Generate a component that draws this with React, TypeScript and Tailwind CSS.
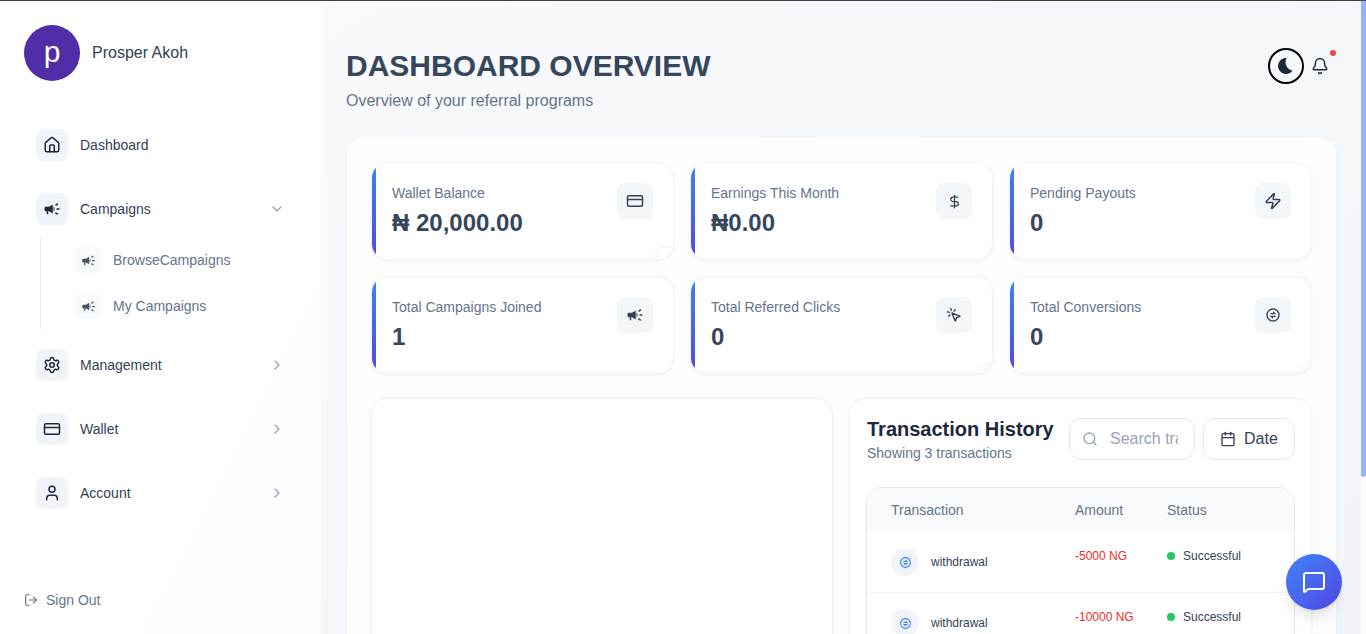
import React from 'react';
import {
  Bell,
  Calendar,
  ChevronDown,
  ChevronRight,
  CreditCard,
  DollarSign,
  House,
  LogOut,
  MessageSquare,
  MousePointerClick,
  Search,
  Settings,
  User,
  Zap,
} from 'lucide-react';
import { MdCampaign } from 'react-icons/md';
import { RiExchangeLine } from 'react-icons/ri';

const stats = [
  { label: 'Wallet Balance', value: '₦ 20,000.00', icon: <CreditCard size={18} />, mark: 'large' },
  { label: 'Earnings This Month', value: '₦0.00', icon: <DollarSign size={15} /> },
  { label: 'Pending Payouts', value: '0', icon: <Zap size={18} /> },
  { label: 'Total Campaigns Joined', value: '1', icon: <MdCampaign size={18} /> },
  { label: 'Total Referred Clicks', value: '0', icon: <MousePointerClick size={16} />, mark: 'small' },
  { label: 'Total Conversions', value: '0', icon: <RiExchangeLine size={16} />, mark: 'small' },
];

const transactions = [
  { type: 'withdrawal', amount: '-5000 NG' },
  { type: 'withdrawal', amount: '-10000 NG' },
  { type: 'withdrawal', amount: '-5000 NG' },
];

function NavItem({
  label,
  icon,
  open,
}: {
  label: string;
  icon: React.ReactNode;
  open?: boolean;
}): React.ReactElement {
  return (
    <div className="flex items-center py-4 pl-9 pr-9">
      <span className="flex h-8 w-8 items-center justify-center rounded-lg bg-[#f1f4f9] text-[#1e293b]">
        {icon}
      </span>
      <span className="ml-3 flex-1 text-sm text-[#334155]">{label}</span>
      {open === undefined ? null : open ? (
        <ChevronDown size={16} className="text-[#94a3b8]" />
      ) : (
        <ChevronRight size={16} className="text-[#94a3b8]" />
      )}
    </div>
  );
}

function SubItem({ label }: { label: string }): React.ReactElement {
  return (
    <div className="flex items-center py-[10px] pl-[34px]">
      <span className="flex h-[26px] w-[26px] items-center justify-center rounded-md bg-[#f8fafc] text-[#475569]">
        <MdCampaign size={15} />
      </span>
      <span className="ml-3 text-sm text-[#64748b]">{label}</span>
    </div>
  );
}

function Sidebar(): React.ReactElement {
  return (
    <aside className="flex w-[321px] shrink-0 flex-col bg-gradient-to-br from-white from-70% to-[#fafbfd]">
      <div className="flex items-center px-6 pt-6">
        <div className="flex h-14 w-14 items-center justify-center rounded-full bg-[#512da8] pb-1 text-[30px] text-white">
          p
        </div>
        <span className="ml-3 text-base text-[#334155]">Prosper Akoh</span>
      </div>
      <nav className="mt-8">
        <NavItem label="Dashboard" icon={<House size={18} />} />
        <NavItem label="Campaigns" icon={<MdCampaign size={18} />} open />
        <div className="-mt-1 mb-1 ml-10 border-l border-[#e8edf4]">
          <SubItem label="BrowseCampaigns" />
          <SubItem label="My Campaigns" />
        </div>
        <NavItem label="Management" icon={<Settings size={18} />} open={false} />
        <NavItem label="Wallet" icon={<CreditCard size={18} />} open={false} />
        <NavItem label="Account" icon={<User size={18} />} open={false} />
      </nav>
      <div className="mt-auto flex items-center gap-2 px-6 pb-6 text-sm text-[#64748b]">
        <LogOut size={14} />
        Sign Out
      </div>
    </aside>
  );
}

function StatCard({
  label,
  value,
  icon,
  mark,
}: {
  label: string;
  value: string;
  icon: React.ReactNode;
  mark?: string;
}): React.ReactElement {
  return (
    <div className="relative flex items-start justify-between overflow-hidden rounded-2xl border border-[#f1f5f9] bg-white p-5 shadow-[0_1px_3px_rgba(15,23,42,0.06)]">
      <div className="absolute inset-y-0 left-0 w-1 bg-gradient-to-b from-[#3b82f6] to-[#4f46e5]" />
      {mark === 'large' && (
        <div className="absolute -bottom-[18px] -right-[14px] h-8 w-8 rounded-lg border-[3px] border-[#f7f8fa]" />
      )}
      {mark === 'small' && (
        <div className="absolute -bottom-3 -right-2 h-6 w-6 rounded-full bg-[#fafbfc]" />
      )}
      <div>
        <div className="text-sm text-[#64748b]">{label}</div>
        <div className="mt-1 text-2xl font-bold text-[#36475d]">{value}</div>
      </div>
      <span className="flex h-9 w-9 items-center justify-center rounded-lg bg-[#f4f7fa] text-[#334155]">
        {icon}
      </span>
    </div>
  );
}

function TransactionHistory(): React.ReactElement {
  return (
    <div className="h-[398px] overflow-hidden rounded-2xl border border-[#f1f5f9] bg-white p-4 shadow-[0_1px_3px_rgba(15,23,42,0.06)]">
      <div className="flex items-start justify-between">
        <div className="ml-px">
          <div className="text-xl font-bold text-[#1e293b]">Transaction History</div>
          <div className="text-sm text-[#64748b]">Showing 3 transactions</div>
        </div>
        <div className="mt-[3px] flex gap-2">
          <div className="flex h-[42px] w-[126px] items-center gap-3 overflow-hidden rounded-xl border border-[#e2e8f0] pl-3 pr-4">
            <Search size={16} className="shrink-0 text-[#94a3b8]" />
            <span className="overflow-hidden whitespace-nowrap text-base text-[#94a3b8]">
              Search transactions
            </span>
          </div>
          <div className="flex h-[42px] w-[92px] items-center gap-2 rounded-xl border border-[#e2e8f0] pl-4 text-base text-[#334155]">
            <Calendar size={16} />
            Date
          </div>
        </div>
      </div>
      <div className="mt-6 overflow-hidden rounded-2xl border border-[#e2e8f0]">
        <div className="grid h-[44px] grid-cols-[184px_92px_1fr] items-center bg-[#f8fafc] px-6 text-sm text-[#64748b]">
          <span>Transaction</span>
          <span>Amount</span>
          <span>Status</span>
        </div>
        {transactions.map((t, i) => (
          <div
            key={i}
            className="grid grid-cols-[184px_92px_1fr] items-start border-b border-[#f1f5f9] px-6 py-4"
          >
            <div className="flex items-center gap-3">
              <span className="flex h-7 w-7 items-center justify-center rounded-full bg-[#f1f5f9] text-[#3b82f6]">
                <RiExchangeLine size={13} />
              </span>
              <span className="text-xs text-[#334155]">{t.type}</span>
            </div>
            <span className="text-xs text-[#ef2b2b]">{t.amount}</span>
            <div className="flex items-center gap-2 text-xs text-[#334155]">
              <span className="h-2 w-2 rounded-full bg-[#22c55e]" />
              Successful
            </div>
          </div>
        ))}
      </div>
    </div>
  );
}

export default function App(): React.ReactElement {
  return (
    <div className="relative flex h-screen overflow-hidden border-t border-[#3f3f46] font-['Liberation_Sans',sans-serif]">
      <Sidebar />
      <main className="flex-1 overflow-hidden bg-gradient-to-br from-[#f8fafc] to-[#f1f5f9] pl-[26px] pr-[25px]">
        <div className="-ml-px flex items-start justify-between pt-[47px]">
          <div>
            <h1 className="text-3xl leading-9 font-bold text-[#36475d]">DASHBOARD OVERVIEW</h1>
            <p className="mt-[5px] text-base text-[#64748b]">Overview of your referral programs</p>
          </div>
          <div className="mr-1 flex items-center gap-1">
            <span className="flex h-9 w-9 items-center justify-center rounded-full border-2 border-black text-[#1e293b]">
              <svg width="16" height="16" viewBox="0 0 16 16" fill="currentColor">
                <path d="M8.7 0A8 8 0 1 0 14.5 12.7A8.5 8.5 0 0 1 8.7 0Z" />
              </svg>
            </span>
            <span className="relative flex h-6 w-6 items-center justify-center text-[#1e293b]">
              <Bell size={18} />
              <span className="absolute -right-[4px] -top-[4px] h-[6px] w-[6px] rounded-full bg-[#ef4444]" />
            </span>
          </div>
        </div>
        <section className="mt-[25px] rounded-2xl bg-[#fdfdfe] p-6 shadow-[0_1px_3px_rgba(15,23,42,0.06)]">
          <div className="grid grid-cols-3 gap-4">
            {stats.map((s) => (
              <StatCard key={s.label} {...s} />
            ))}
          </div>
          <div className="mt-6 grid grid-cols-[462px_1fr] gap-4">
            <div className="rounded-2xl border border-[#f1f5f9] bg-white shadow-[0_1px_3px_rgba(15,23,42,0.06)]" />
            <TransactionHistory />
          </div>
        </section>
      </main>
      <div className="w-[5px] shrink-0 bg-[#fafbfd]">
        <div className="h-[476px] rounded-b-full bg-[#93b4f8]" />
      </div>
      <button className="absolute bottom-[24px] right-[24px] flex h-14 w-14 items-center justify-center rounded-full bg-gradient-to-br from-[#3b82f6] to-[#4f46e5] text-white shadow-lg">
        <MessageSquare size={24} />
      </button>
    </div>
  );
}
